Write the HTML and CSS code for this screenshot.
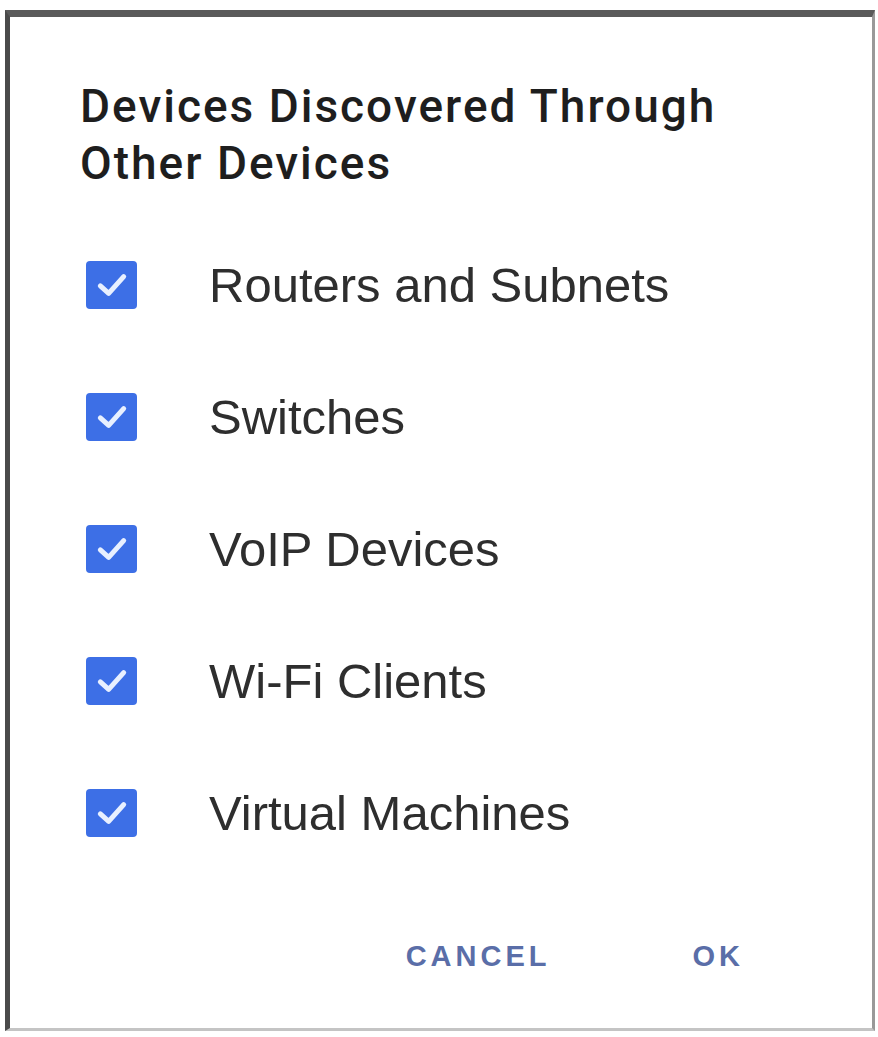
FILE: index.html
```html
<!DOCTYPE html>
<html lang="en">
  <head>
    <meta name="viewport" content="width=device-width, initial-scale=1.0" />
    <title>Devices Discovered Through Other Devices</title>
    <link rel="stylesheet" href="styles.css">
  </head>
  <body>
    <div class="dialog">
      <h3 class="title">Devices Discovered Through<br />Other Devices</h3>
      <ul class="options">
        <li class="option">
          <span class="check">
            <svg viewBox="0 0 24 24"><polyline points="5,12.5 10,17 19,7" /></svg>
          </span>
          <span class="label">Routers and Subnets</span>
        </li>
        <li class="option">
          <span class="check">
            <svg viewBox="0 0 24 24"><polyline points="5,12.5 10,17 19,7" /></svg>
          </span>
          <span class="label">Switches</span>
        </li>
        <li class="option">
          <span class="check">
            <svg viewBox="0 0 24 24"><polyline points="5,12.5 10,17 19,7" /></svg>
          </span>
          <span class="label">VoIP Devices</span>
        </li>
        <li class="option">
          <span class="check">
            <svg viewBox="0 0 24 24"><polyline points="5,12.5 10,17 19,7" /></svg>
          </span>
          <span class="label">Wi-Fi Clients</span>
        </li>
        <li class="option">
          <span class="check">
            <svg viewBox="0 0 24 24"><polyline points="5,12.5 10,17 19,7" /></svg>
          </span>
          <span class="label">Virtual Machines</span>
        </li>
      </ul>
      <div class="actions">
        <button class="btn">Cancel</button>
        <button class="btn">OK</button>
      </div>
    </div>
  </body>
</html>
```

FILE: styles.css
```css
* {
  padding: 0;
  margin: 0;
  box-sizing: border-box;
}
body {
  background-color: #ffffff;
  font-family: "Liberation Sans", Arial, sans-serif;
}
.dialog {
  margin: 10px 3px 6px 5px;
  height: 1021px;
  background-color: #ffffff;
  border-top: 7px solid #5a5a5a;
  border-left: 5px solid #4a4a4a;
  border-right: 3px solid #999999;
  border-bottom: 3px solid #c4c4c4;
  padding: 61px 0 0 70px;
}
.title {
  font-family: Roboto, sans-serif;
  font-size: 46px;
  font-weight: 500;
  letter-spacing: 2px;
  line-height: 57px;
  color: #1e1e1e;
}
.options {
  list-style: none;
  margin-top: 27px;
  padding-left: 6px;
}
.option {
  height: 132px;
  display: flex;
  align-items: center;
  gap: 72px;
}
.check {
  width: 51px;
  height: 48px;
  border-radius: 4px;
  background-color: #3d6fe6;
  display: flex;
  align-items: center;
  justify-content: center;
}
.check svg {
  width: 40px;
  height: 40px;
  fill: none;
  stroke: #e8f0ff;
  stroke-width: 3;
  stroke-linecap: round;
  stroke-linejoin: round;
}
.label {
  font-size: 49px;
  color: #2e2e2e;
}
.actions {
  display: flex;
  justify-content: flex-end;
  align-items: center;
  height: 60px;
  margin-top: 47px;
  padding-right: 128px;
  gap: 142px;
}
.btn {
  font-family: "Liberation Sans", Arial, sans-serif;
  font-size: 29px;
  font-weight: 700;
  letter-spacing: 4px;
  text-transform: uppercase;
  color: #5a6ea8;
  background: none;
  border: none;
  outline: none;
  cursor: pointer;
}
```
